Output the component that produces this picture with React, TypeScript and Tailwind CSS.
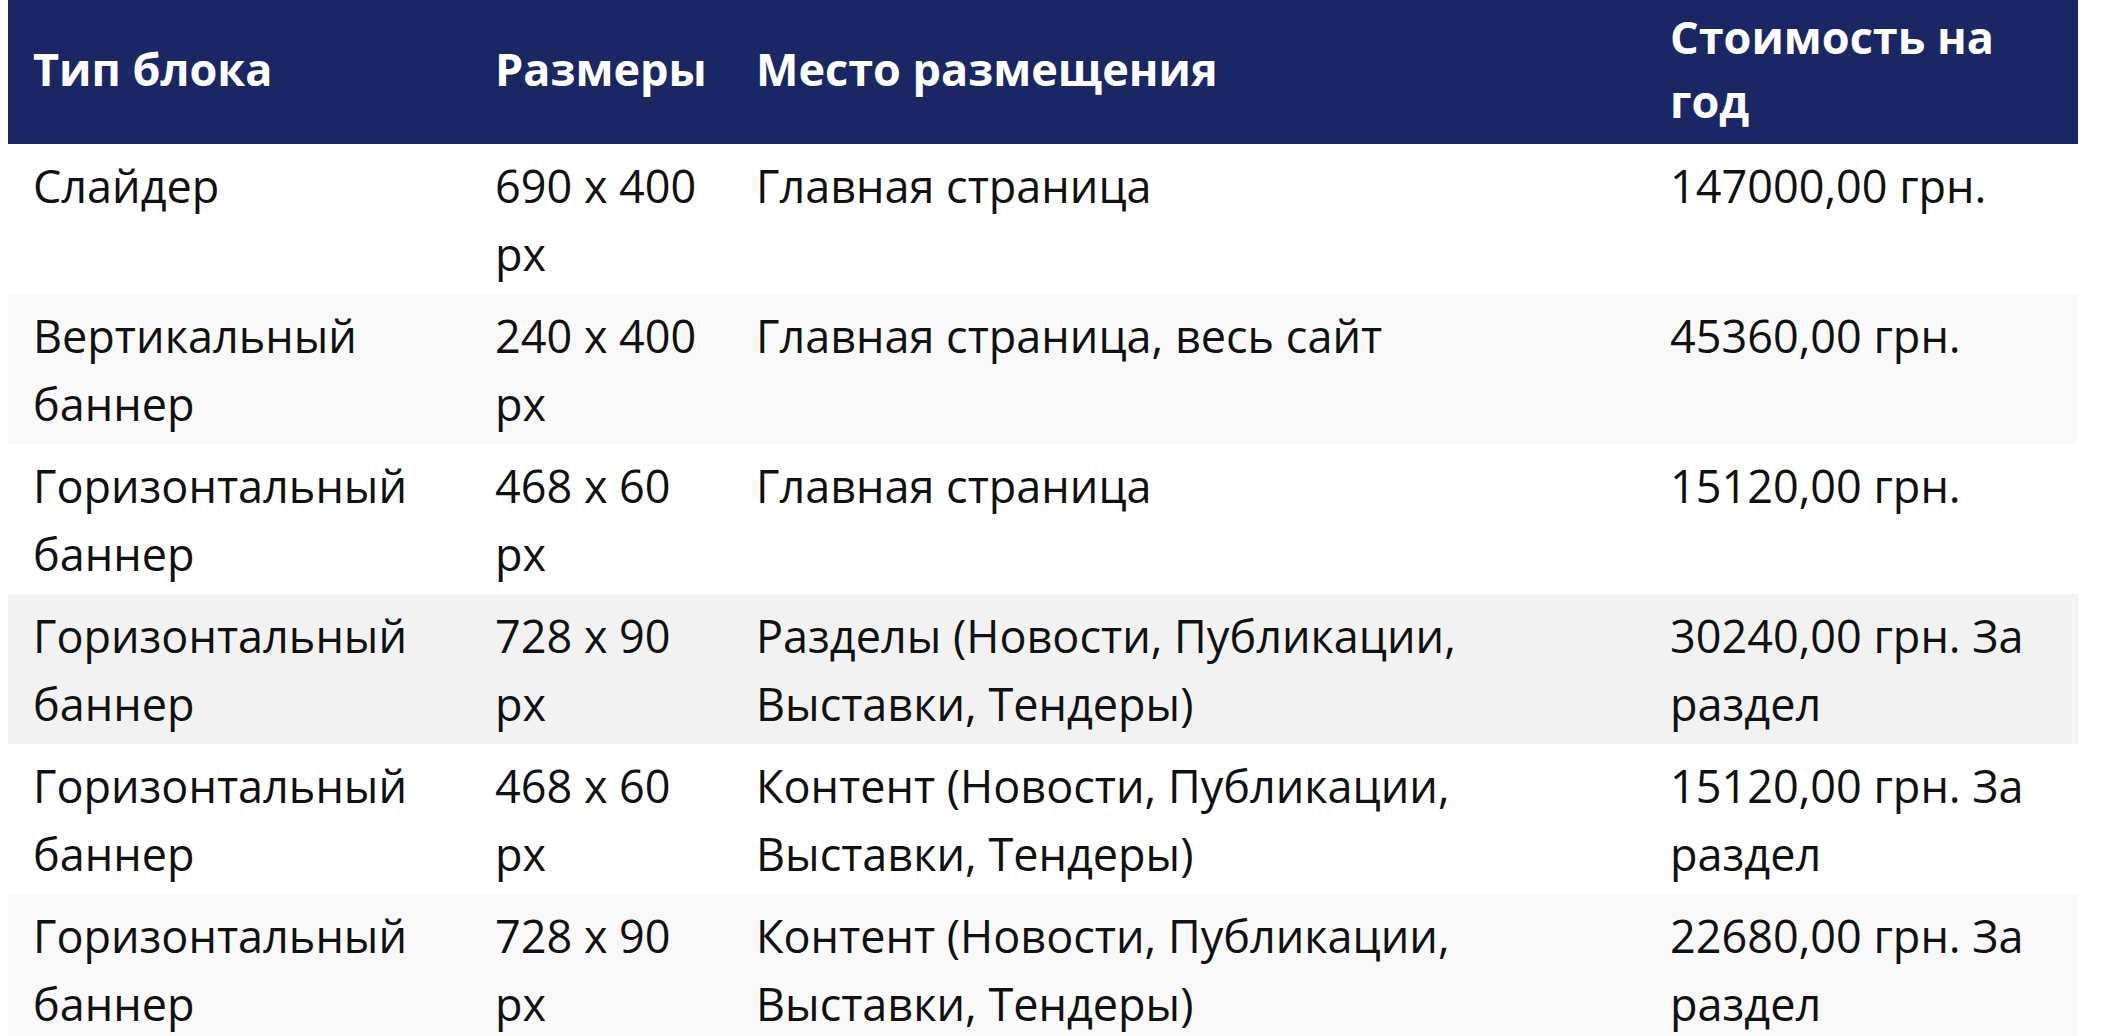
type Row = {
    type: string;
    size: string;
    place: string;
    price: string;
    bg: string;
};

const rows: Row[] = [
    { type: "Слайдер", size: "690 x 400 px", place: "Главная страница", price: "147000,00 грн.", bg: "bg-white" },
    { type: "Вертикальный баннер", size: "240 x 400 px", place: "Главная страница, весь сайт", price: "45360,00 грн.", bg: "bg-[#f9f9f9]" },
    { type: "Горизонтальный баннер", size: "468 x 60 px", place: "Главная страница", price: "15120,00 грн.", bg: "bg-white" },
    { type: "Горизонтальный баннер", size: "728 x 90 px", place: "Разделы (Новости, Публикации, Выставки, Тендеры)", price: "30240,00 грн. За раздел", bg: "bg-[#f2f2f2]" },
    { type: "Горизонтальный баннер", size: "468 x 60 px", place: "Контент (Новости, Публикации, Выставки, Тендеры)", price: "15120,00 грн. За раздел", bg: "bg-white" },
    { type: "Горизонтальный баннер", size: "728 x 90 px", place: "Контент (Новости, Публикации, Выставки, Тендеры)", price: "22680,00 грн. За раздел", bg: "bg-[#f9f9f9]" },
];

const headers = ["Тип блока", "Размеры", "Место размещения", "Стоимость на год"];

/**
 * Price table for ad blocks
 */
const App = () => {
    return (
        <div className="min-h-screen bg-white font-['Open_Sans',sans-serif] text-[#111111]">
            <table className="ml-[8px] w-[2070px] table-fixed border-collapse">
                <colgroup>
                    <col className="w-[462px]" />
                    <col className="w-[261px]" />
                    <col className="w-[914px]" />
                    <col className="w-[433px]" />
                </colgroup>
                <thead>
                    <tr className="bg-[#1b2765] h-[144px]">
                        {headers.map((h) => (
                            <th
                                key={h}
                                className="px-[25px] pt-[5px] pb-[11px] text-left align-middle text-[45px] leading-[64px] font-bold text-white"
                            >
                                {h}
                            </th>
                        ))}
                    </tr>
                </thead>
                <tbody>
                    {rows.map((r, i) => (
                        <tr key={i} className={`${r.bg} h-[150px]`}>
                            <td className="px-[25px] pt-[8px] pb-[7px] align-top text-[45px] leading-[67.5px]">
                                {r.type}
                            </td>
                            <td className="px-[25px] pt-[8px] pb-[7px] align-top text-[45px] leading-[67.5px]">
                                {r.size}
                            </td>
                            <td className="px-[25px] pt-[8px] pb-[7px] align-top text-[45px] leading-[67.5px]">
                                {r.place}
                            </td>
                            <td className="px-[25px] pt-[8px] pb-[7px] align-top text-[45px] leading-[67.5px]">
                                {r.price}
                            </td>
                        </tr>
                    ))}
                </tbody>
            </table>
        </div>
    );
};

export default App;
